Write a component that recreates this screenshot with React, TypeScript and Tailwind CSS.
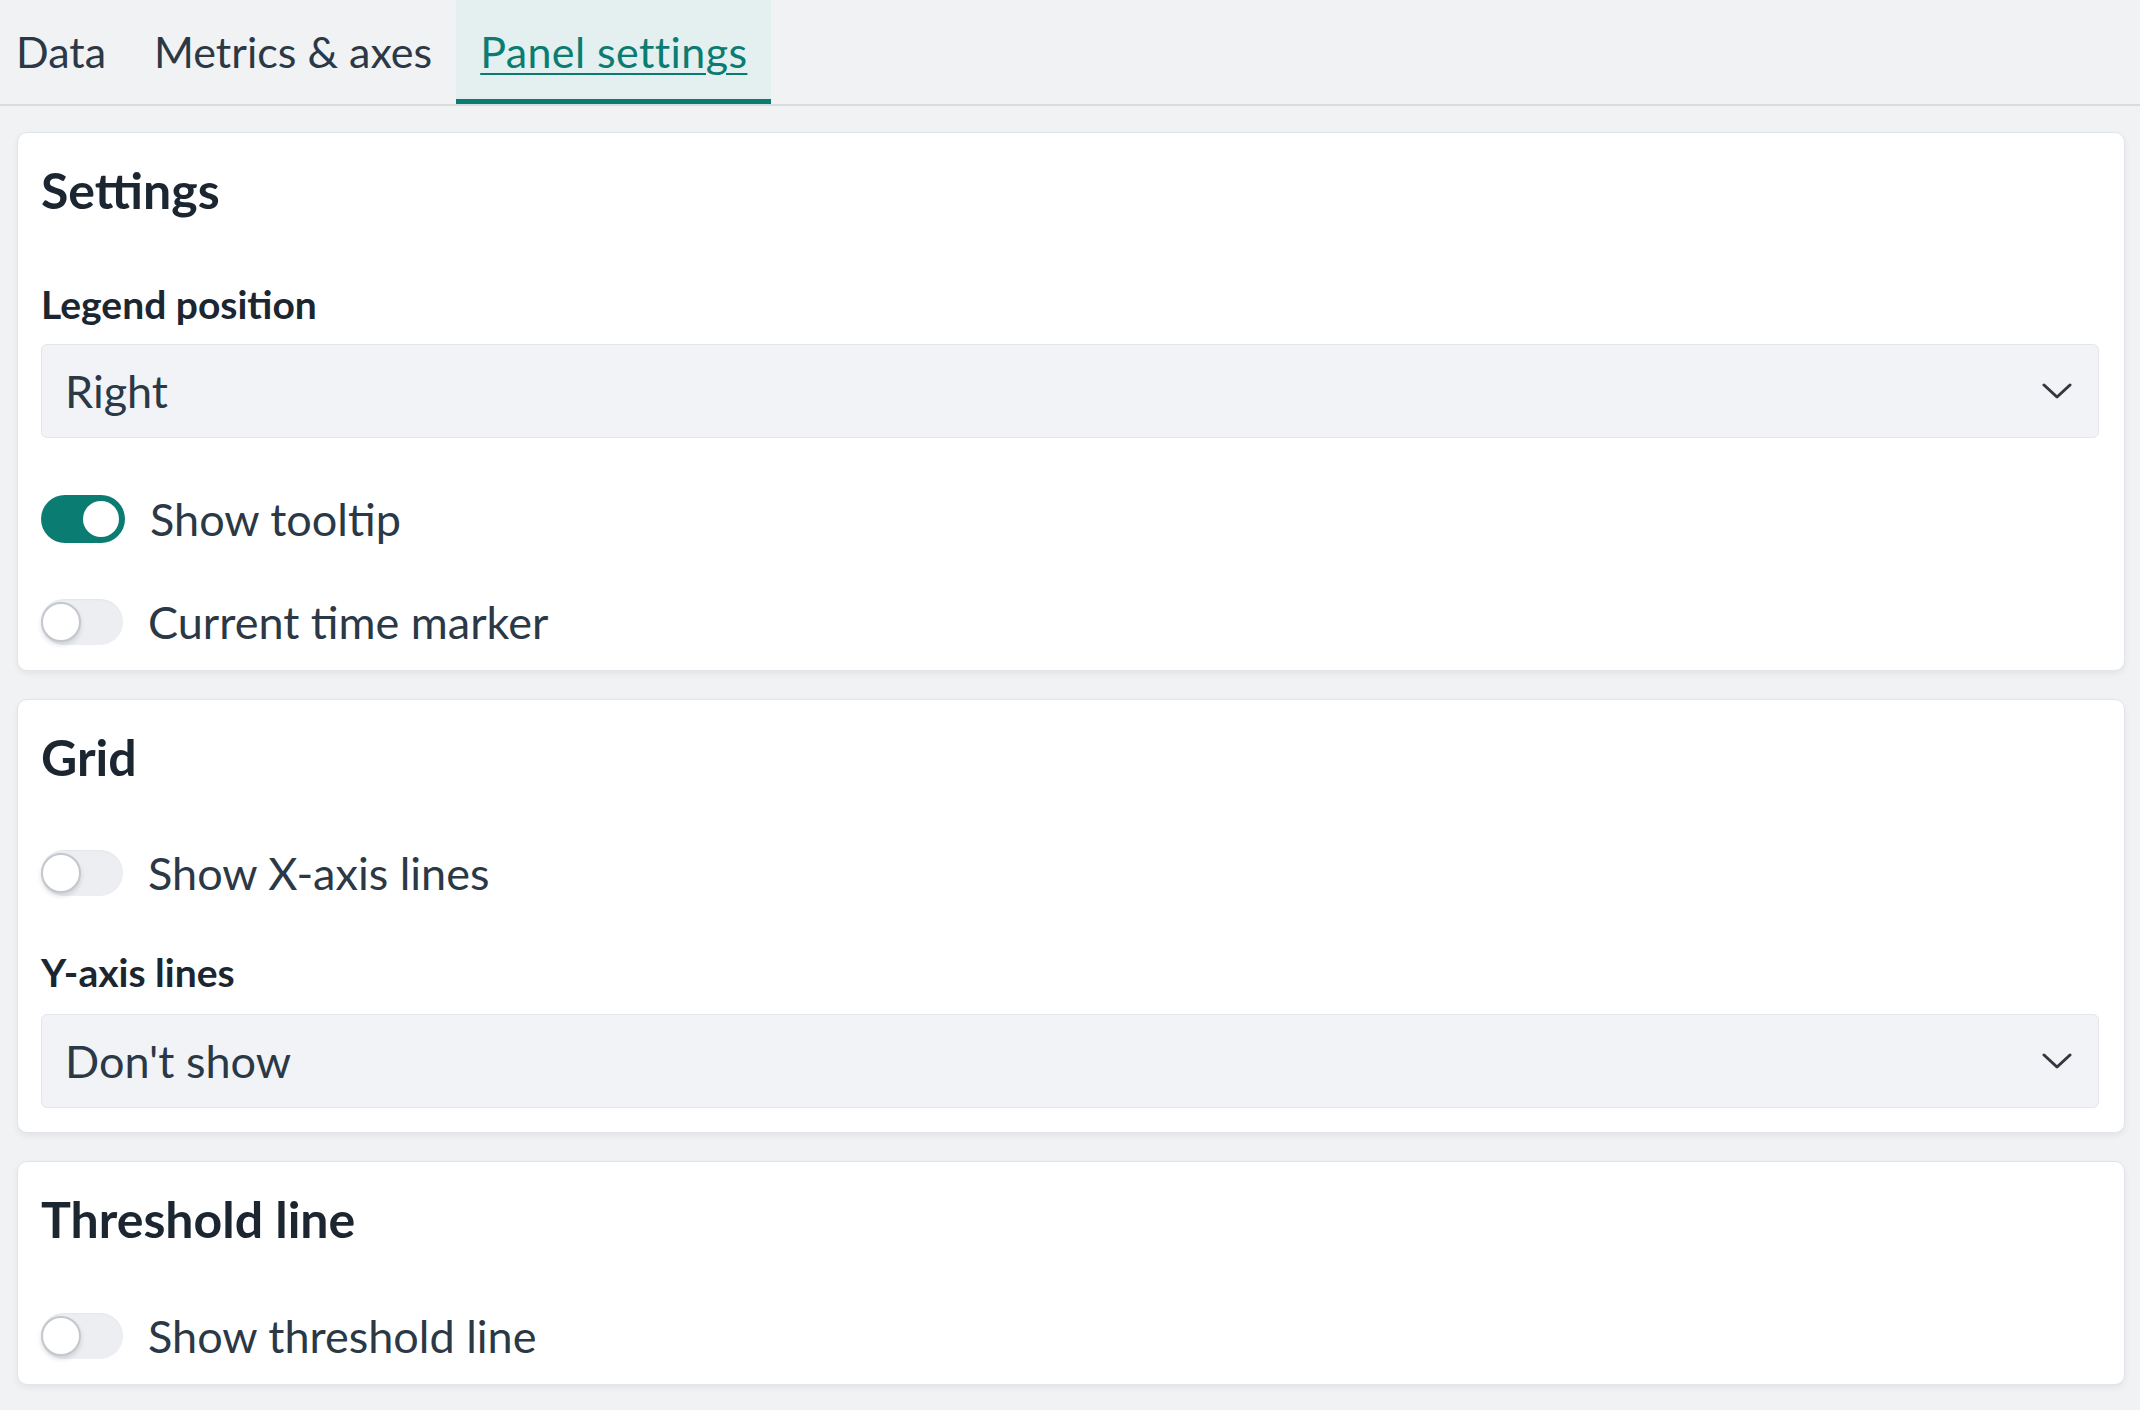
import { useState } from "react";

const font = { fontFamily: "Lato, 'Noto Sans', sans-serif" };

function Chevron() {
  return (
    <svg width="30" height="16" viewBox="0 0 30 16" fill="none" className="shrink-0">
      <path d="M2 2 L15 14 L28 2" stroke="#343741" strokeWidth="3" strokeLinecap="round" strokeLinejoin="round" />
    </svg>
  );
}

function Select({ value }: { value: string }) {
  return (
    <div className="flex h-[94px] items-center justify-between rounded-[6px] border border-[#e3e6eb] bg-[#f1f3f6] pl-[23px] pr-[26px]">
      <span className="text-[45px] leading-[54px] text-[#2b3846]">{value}</span>
      <Chevron />
    </div>
  );
}

function Toggle({ label, on }: { label: string; on: boolean }) {
  const [checked, setChecked] = useState(on);
  return (
    <button type="button" onClick={() => setChecked(!checked)} className="flex h-[48px] items-center gap-[25px] text-left">
      {checked ? (
        <span className="flex h-[48px] w-[84px] items-center justify-end rounded-full bg-[#0b7c72] pr-[6px]">
          <span className="h-[36px] w-[36px] rounded-full bg-white" />
        </span>
      ) : (
        <span className="flex h-[46px] w-[82px] items-center rounded-full bg-[#eceef1] shadow-[inset_0_1px_2px_rgba(0,0,0,0.04)]">
          <span className="h-[40px] w-[40px] rounded-full border-2 border-[#c3c8cf] bg-white shadow-[0_3px_5px_rgba(0,0,0,0.12)]" />
        </span>
      )}
      <span className="text-[45px] leading-[54px] text-[#2b3846]">{label}</span>
    </button>
  );
}

function Card({ title, children }: { title: string; children: React.ReactNode }) {
  return (
    <section className="rounded-[10px] border border-[#e1e4e8] bg-white pb-[24px] pl-[23px] pr-[25px] pt-[25px] shadow-[0_3px_6px_rgba(0,0,0,0.06)]">
      <h2 className="text-[50px] font-bold leading-[64px] text-[#1b2631]">{title}</h2>
      {children}
    </section>
  );
}

function Label({ children }: { children: React.ReactNode }) {
  return <div className="text-[39px] font-bold leading-[48px] text-[#1b2631]">{children}</div>;
}

export default function App() {
  const [tab, setTab] = useState("Panel settings");
  const tabs = ["Data", "Metrics & axes", "Panel settings"];

  return (
    <div className="min-h-[1410px] w-full bg-[#f1f2f4]" style={font}>
      {/* Tabs */}
      <div className="flex border-b-2 border-[#d8dbe0]">
        {tabs.map((t, i) => {
          const active = t === tab;
          return (
            <button
              key={t}
              type="button"
              onClick={() => setTab(t)}
              className={
                (i === 0 ? "pl-[16px] pr-[24px] " : "px-[24px] ") +
                "flex h-[104px] items-center text-[43px] " +
                (active
                  ? "bg-[#e3f0ef] tracking-[0.4px] text-[#0b7c72] underline decoration-2 underline-offset-[5px] shadow-[inset_0_-5px_0_#0b7c72]"
                  : "text-[#2b3846]")
              }
            >
              {t}
            </button>
          );
        })}
      </div>

      <div className="flex flex-col gap-[28px] pb-[26px] pl-[17px] pr-[15px] pt-[26px]">
        <Card title="Settings">
          <div className="mt-[58px]">
            <Label>Legend position</Label>
          </div>
          <div className="mt-[16px]">
            <Select value="Right" />
          </div>
          <div className="mt-[57px] flex flex-col gap-[55px]">
            <Toggle label="Show tooltip" on={true} />
            <Toggle label="Current time marker" on={false} />
          </div>
        </Card>

        <Card title="Grid">
          <div className="mt-[60px]">
            <Toggle label="Show X-axis lines" on={false} />
          </div>
          <div className="mt-[51px]">
            <Label>Y-axis lines</Label>
          </div>
          <div className="mt-[18px]">
            <Select value="Don't show" />
          </div>
        </Card>

        <Card title="Threshold line">
          <div className="mt-[61px]">
            <Toggle label="Show threshold line" on={false} />
          </div>
        </Card>
      </div>
    </div>
  );
}
